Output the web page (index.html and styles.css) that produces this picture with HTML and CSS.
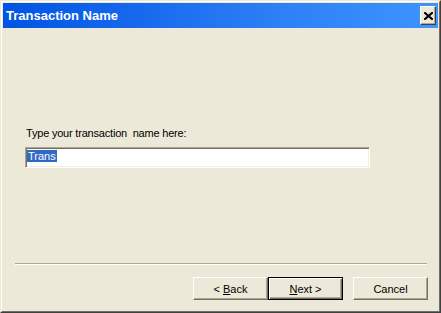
FILE: index.html
```html
<!DOCTYPE html>
<html lang="en">
<head>
    <meta charset="UTF-8">
    <title>Transaction Name</title>
    <link rel="stylesheet" href="styles.css">
</head>
<body>
    <div class="window">
        <div class="window-inner">
            <div class="titlebar">
                <div class="title">Transaction Name</div>
                <div class="close-btn">
                    <svg width="9" height="8" viewBox="0 0 9 8">
                        <path d="M1 1 L8 7 M8 1 L1 7" stroke="#000" stroke-width="2.2" stroke-linecap="square" fill="none"/>
                    </svg>
                </div>
            </div>

            <div class="content">
                <div class="form">
                    <label class="field-label">Type your transaction&nbsp; name here:</label>
                    <div class="textbox"><span class="selected">Trans</span></div>
                </div>

                <div class="separator"></div>

                <div class="buttons">
                    <div class="btn"><span>&lt; <u>B</u>ack</span></div>
                    <div class="btn btn-default"><span><u>N</u>ext &gt;</span></div>
                    <div class="btn btn-cancel"><span>Cancel</span></div>
                </div>
            </div>
        </div>
    </div>
</body>
</html>
```

FILE: styles.css
```css
* {
    margin: 0;
    padding: 0;
    box-sizing: border-box;
}

body {
    font-family: 'Liberation Sans', Arial, sans-serif;
    font-size: 11px;
    color: #000;
    background: #ece9d8;
    width: 441px;
    height: 313px;
    overflow: hidden;
}

/* window frame */
.window {
    width: 441px;
    height: 313px;
    border: 1px solid;
    border-color: #ece9d8 #404040 #404040 #ece9d8;
}

.window-inner {
    height: 100%;
    border: 1px solid;
    border-color: #fff #716f64 #716f64 #fff;
    padding: 1px;
    background: #ece9d8;
    display: flex;
    flex-direction: column;
}

/* title bar */
.titlebar {
    height: 25px;
    background: linear-gradient(to right, #0054e3, #2b7df5 60%, #3d95ff);
    display: flex;
    align-items: center;
    justify-content: space-between;
    padding: 0 2px 0 3px;
}

.title {
    color: #fff;
    font-weight: 700;
    font-size: 13px;
}

.close-btn {
    width: 16px;
    height: 19px;
    background: #ece9d8;
    border: 1px solid;
    border-color: #fff #404040 #404040 #fff;
    box-shadow: inset -1px -1px #aca899;
    display: flex;
    align-items: center;
    justify-content: center;
}

/* content */
.content {
    flex: 1;
    display: flex;
    flex-direction: column;
}

.form {
    margin-top: 99px;
    padding-left: 22px;
}

.field-label {
    display: block;
    line-height: 13px;
    margin-left: 1px;
    margin-bottom: 7px;
    letter-spacing: -0.2px;
}

.textbox {
    width: 345px;
    height: 21px;
    background: #fff;
    border: 1px solid;
    border-color: #aca899 #fff #fff #aca899;
    box-shadow: inset 1px 1px #716f64, inset -1px -1px #f1efe2;
    padding: 2px 0 0 1px;
    line-height: 13px;
}

.selected {
    background: #316ac5;
    color: #fff;
    padding: 0 1px;
}

.separator {
    margin: auto 11px 0 12px;
    height: 2px;
    border-top: 1px solid #aca899;
    border-bottom: 1px solid #fff;
}

.buttons {
    display: flex;
    justify-content: flex-end;
    padding: 12px 10px 10px 0;
}

.btn {
    width: 75px;
    height: 23px;
    background: #ece9d8;
    border: 1px solid;
    border-color: #fff #716f64 #716f64 #fff;
    box-shadow: inset -1px -1px #aca899;
    display: flex;
    align-items: center;
    justify-content: center;
    color: #000;
}

.btn-default {
    border-color: #000;
    box-shadow: inset 1px 1px #fff, inset -1px -1px #716f64, inset -2px -2px #aca899;
}

.btn-cancel {
    margin-left: 10px;
}
```
